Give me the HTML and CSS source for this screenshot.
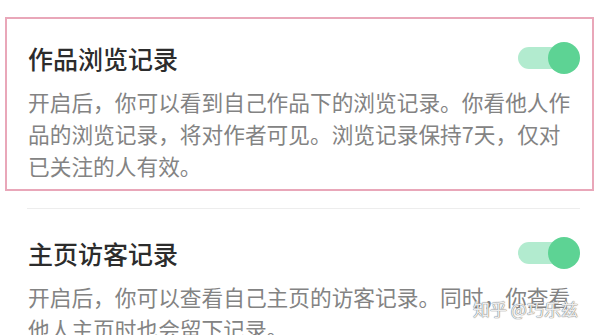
FILE: index.html
```html
<!DOCTYPE html>
<html lang="zh-CN">
<head>
<meta charset="utf-8">
<title>隐私设置</title>
<link rel="stylesheet" href="styles.css">
</head>
<body>
<div class="page">
  <section class="card card-highlight">
    <div class="row">
      <h2 class="title">作品浏览记录</h2>
      <span class="toggle"><span class="knob"></span></span>
    </div>
    <p class="desc">开启后，你可以看到自己作品下的浏览记录。你看他人作品的浏览记录，将对作者可见。浏览记录保持7天，仅对已关注的人有效。</p>
  </section>
  <hr class="divider">
  <section class="card card-plain">
    <div class="row">
      <h2 class="title">主页访客记录</h2>
      <span class="toggle"><span class="knob"></span></span>
    </div>
    <p class="desc">开启后，你可以查看自己主页的访客记录。同时，你查看他人主页时也会留下记录。</p>
  </section>
  <div class="watermark">知乎 @巧乐兹</div>
</div>
</body>
</html>
```
FILE: styles.css
```css
html, body {
  margin: 0;
  padding: 0;
  background: #ffffff;
}
body {
  width: 599px;
  height: 335px;
  overflow: hidden;
  font-family: "Noto Sans CJK SC", "Noto Sans", sans-serif;
}
.page {
  position: relative;
  padding: 17px 0 0 5px;
}
.card {
  width: 589px;
  box-sizing: border-box;
  border: 2px solid transparent;
  padding: 22px 12px 7px 21px;
}
.card-highlight {
  border-color: #e9a7b9;
}
.card-plain {
  padding-top: 25px;
}
.row {
  display: flex;
  align-items: center;
  justify-content: space-between;
  height: 34px;
}
.title {
  margin: 0;
  font-size: 25px;
  line-height: 34px;
  font-weight: 500;
  color: #2c2c2c;
}
.toggle {
  position: relative;
  width: 62px;
  height: 32px;
  flex: none;
}
.toggle::before {
  content: "";
  position: absolute;
  left: 0;
  top: 5px;
  width: 56px;
  height: 22px;
  border-radius: 11px;
  background: #b2ebcf;
}
.knob {
  position: absolute;
  right: 0;
  top: 0;
  width: 32px;
  height: 32px;
  border-radius: 50%;
  background: #5dd394;
}
.desc {
  margin: 11px 0 0 0;
  max-width: 550px;
  font-size: 21.7px;
  line-height: 32px;
  color: #838383;
}
.divider {
  margin: 17px 0 0 22px;
  width: 553px;
  height: 1px;
  border: 0;
  background: #ededed;
}
.watermark {
  position: absolute;
  left: 473px;
  top: 297px;
  font-size: 17px;
  line-height: 24px;
  color: rgba(255, 255, 255, 0.9);
  text-shadow: 0 0 1px #6f6f6f, 0 0 1px #6f6f6f;
  white-space: nowrap;
}
```
